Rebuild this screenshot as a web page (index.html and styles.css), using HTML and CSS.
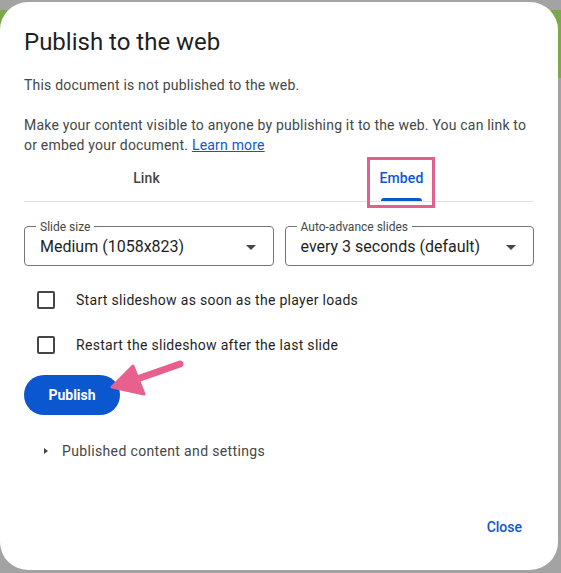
FILE: index.html
```html
<!DOCTYPE html>
<html lang="en">
<head>
<meta charset="utf-8">
<title>Publish to the web</title>
<link rel="stylesheet" href="styles.css">
</head>
<body>
<div class="dialog">
  <h1 class="title">Publish to the web</h1>
  <p class="status">This document is not published to the web.</p>
  <p class="desc">Make your content visible to anyone by publishing it to the web. You can link to<br>or embed your document. <a class="link" href="#">Learn more</a></p>

  <div class="tabs">
    <div class="tab">Link</div>
    <div class="tab active">
      <span class="tab-label">Embed<span class="tab-indicator"></span><span class="highlight"></span></span>
    </div>
  </div>

  <div class="selects">
    <div class="select">
      <span class="select-label">Slide size</span>
      <span class="select-value">Medium (1058x823)</span>
      <svg class="caret" width="10" height="5" viewBox="0 0 10 5"><path d="M0 0h10L5 5z" fill="#444746"/></svg>
    </div>
    <div class="select">
      <span class="select-label">Auto-advance slides</span>
      <span class="select-value">every 3 seconds (default)</span>
      <svg class="caret" width="10" height="5" viewBox="0 0 10 5"><path d="M0 0h10L5 5z" fill="#444746"/></svg>
    </div>
  </div>

  <div class="checks">
    <label class="check"><span class="box"></span><span>Start slideshow as soon as the player loads</span></label>
    <label class="check"><span class="box"></span><span>Restart the slideshow after the last slide</span></label>
  </div>

  <div class="actions">
    <button class="publish">Publish</button>
  </div>

  <div class="expander">
    <svg class="expander-icon" width="4" height="6" viewBox="0 0 4 6"><path d="M0 0l4 3-4 3z" fill="#444746"/></svg>
    <span>Published content and settings</span>
  </div>

  <div class="footer">
    <button class="close">Close</button>
  </div>

  <svg class="pointer" width="80" height="44" viewBox="0 0 80 44">
    <path d="M32 20L72 6" stroke="#e7608e" stroke-width="7" stroke-linecap="round" fill="none"/>
    <path d="M4 29L25 8L36 36Z" fill="#e7608e" stroke="#e7608e" stroke-width="3" stroke-linejoin="round"/>
  </svg>
</div>
</body>
</html>
```

FILE: styles.css
```css
* { box-sizing: border-box; }

html, body { margin: 0; padding: 0; }

body {
  width: 561px;
  height: 573px;
  overflow: hidden;
  background:
    linear-gradient(#7ba84c, #7ba84c) 0 10px / 14px 18px no-repeat,
    linear-gradient(#7ba84c, #7ba84c) 548px 10px / 13px 68px no-repeat,
    #a3a3a3;
  font-family: Roboto, "Liberation Sans", Arial, sans-serif;
  color: #444746;
}

.dialog {
  position: relative;
  margin-top: 2px;
  width: 558px;
  height: 568px;
  background: #fff;
  border-radius: 28px;
  padding: 24px 24px 25px;
  display: flex;
  flex-direction: column;
}

.title {
  margin: 0;
  font-size: 24px;
  line-height: 32px;
  font-weight: 400;
  color: #1f1f1f;
}

.status {
  margin: 17px 0 0;
  font-size: 14px;
  line-height: 20px;
  letter-spacing: 0.2px;
}

.desc {
  margin: 20px 0 0;
  font-size: 14px;
  line-height: 20px;
  letter-spacing: 0.2px;
}

.link {
  color: #0b57d0;
  text-decoration: underline;
}

.tabs {
  display: grid;
  grid-template-columns: 1fr 1fr;
  height: 48px;
  border-bottom: 1px solid #e1e3e1;
  margin-top: -1px;
}

.tab {
  position: relative;
  display: flex;
  justify-content: center;
  align-items: center;
  font-size: 14px;
  font-weight: 500;
  color: #444746;
  left: -5px;
  letter-spacing: 0.1px;
}

.tab.active { color: #0b57d0; }

.tab-label {
  position: relative;
  display: flex;
  justify-content: center;
  height: 100%;
  align-items: center;
  padding-top: 1px;
}

.tab-indicator {
  position: absolute;
  bottom: 0;
  left: 1px;
  right: 1px;
  height: 3px;
  background: #0b57d0;
  border-radius: 3px 3px 0 0;
}

.highlight {
  position: absolute;
  top: 3px;
  left: -13px;
  right: -12px;
  height: 51px;
  border: 3px solid #e0608e;
}

.selects {
  display: grid;
  grid-template-columns: 1fr 1fr;
  gap: 11px;
  margin-top: 24px;
}

.select {
  position: relative;
  height: 40px;
  border: 1px solid #747775;
  border-radius: 4px;
  display: flex;
  align-items: center;
  padding: 0 17px 0 15px;
}

.select-label {
  position: absolute;
  top: -7px;
  left: 11px;
  padding: 0 4px;
  background: #fff;
  font-size: 12px;
  line-height: 14px;
  color: #444746;
}

.select-value {
  flex: 1;
  font-size: 16px;
  line-height: 24px;
  color: #1f1f1f;
  padding-top: 2px;
}

.caret { flex: none; margin-top: 2px; }

.checks {
  margin-top: 11px;
  display: flex;
  flex-direction: column;
}

.check {
  height: 45px;
  display: flex;
  align-items: center;
  gap: 21px;
  padding-left: 13px;
  font-size: 14px;
  color: #1f1f1f;
  letter-spacing: 0.3px;
}

.box {
  width: 18px;
  height: 18px;
  border: 2px solid #444746;
  border-radius: 2px;
  flex: none;
}

.actions {
  margin-top: 8px;
  display: flex;
}

.publish {
  width: 96px;
  height: 40px;
  border: 0;
  border-radius: 20px;
  background: #0b57d0;
  color: #fff;
  font-family: inherit;
  font-size: 14px;
  font-weight: 700;
}

.expander {
  margin-top: 16px;
  height: 40px;
  display: flex;
  align-items: center;
  padding-left: 20px;
  gap: 14px;
  font-size: 14px;
  color: #444746;
  letter-spacing: 0.35px;
}

.footer {
  margin-top: auto;
  display: flex;
  justify-content: flex-end;
}

.close {
  height: 36px;
  padding: 0 12px;
  border: 0;
  background: none;
  color: #0b57d0;
  font-family: inherit;
  font-size: 14px;
  font-weight: 500;
}

.pointer {
  position: absolute;
  left: 108px;
  top: 356px;
}
```
